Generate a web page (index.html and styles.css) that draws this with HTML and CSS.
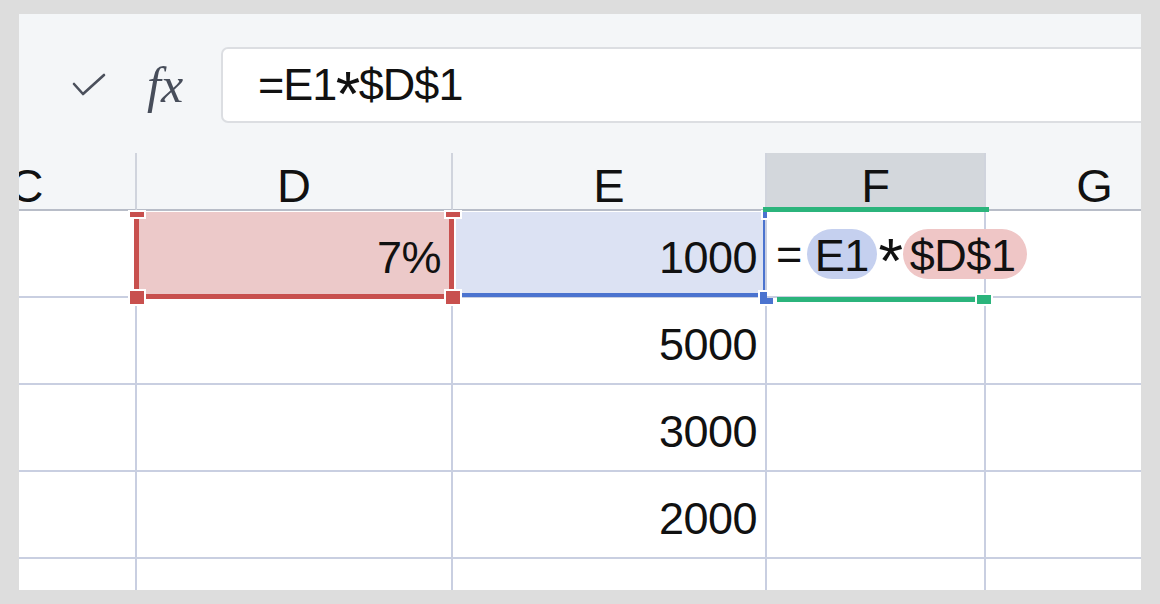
FILE: index.html
```html
<html lang="ja">
<head>
    <meta charset="UTF-8">
    <title>Formula reference</title>
    <link rel="stylesheet" href="styles.css">
</head>
<body>
    <div class="panel">
        <div class="formula-bar">
            <svg class="check" width="34" height="24" viewBox="0 0 34 24">
                <polyline points="2,11 11,21 32,2" fill="none" stroke="#4b505c" stroke-width="2.6" stroke-linecap="round" stroke-linejoin="round"/>
            </svg>
            <span class="fx">fx</span>
            <div class="formula-input">=E1<span class="op">*</span>$D$1</div>
        </div>

        <div class="sheet">
            <div class="head">C</div>
            <div class="head">D</div>
            <div class="head">E</div>
            <div class="head head-active">F</div>
            <div class="head">G</div>

            <!-- row 1 -->
            <div class="cell"></div>
            <div class="cell cell-d1">
                <span class="ref-red"></span>
                <span class="knob red top-left"></span>
                <span class="knob red top-right"></span>
                <span class="knob red bot-left"></span>
                <span class="knob red bot-right"></span>
                <span class="val">7%</span>
            </div>
            <div class="cell cell-e1">
                <span class="ref-blue"></span>
                <span class="knob blue top-right"></span>
                <span class="knob blue bot-right"></span>
                <span class="val">1000</span>
            </div>
            <div class="cell cell-f1">
                <span class="edit-top"></span>
                <span class="edit-bottom"></span>
                <span class="knob green bot-right"></span>
                <span class="eq">=</span>
                <span class="pill pill-blue">E1</span>
                <span class="op">*</span>
                <span class="pill pill-red">$D$1</span>
            </div>
            <div class="cell"></div>

            <!-- row 2 -->
            <div class="cell"></div>
            <div class="cell"></div>
            <div class="cell"><span class="val">5000</span></div>
            <div class="cell"></div>
            <div class="cell"></div>

            <!-- row 3 -->
            <div class="cell"></div>
            <div class="cell"></div>
            <div class="cell"><span class="val">3000</span></div>
            <div class="cell"></div>
            <div class="cell"></div>

            <!-- row 4 -->
            <div class="cell"></div>
            <div class="cell"></div>
            <div class="cell"><span class="val">2000</span></div>
            <div class="cell"></div>
            <div class="cell"></div>

            <!-- row 5 -->
            <div class="cell"></div>
            <div class="cell"></div>
            <div class="cell"></div>
            <div class="cell"></div>
            <div class="cell"></div>
        </div>
    </div>
</body>
</html>
```

FILE: styles.css
```css
body{
    margin: 0;
    padding: 14px 0 0 19px;
    background-color: #dddddd;
    font-family: "Liberation Sans", Arial, sans-serif;
    color: #111111;
}

.panel{
    width: 1122px;
    height: 576px;
    overflow: hidden;
    background-color: #f4f6f8;
}

/* formula bar */
.formula-bar{
    display: flex;
    align-items: center;
    height: 76px;
    padding: 33px 0 0 53px;
}
.check{
    display: block;
    flex-shrink: 0;
}
.fx{
    width: 50px;
    margin-left: 41px;
    font-family: "Liberation Serif", serif;
    font-style: italic;
    font-size: 50px;
    color: #474d5a;
    flex-shrink: 0;
}
.formula-input{
    flex: 1;
    display: flex;
    align-items: center;
    box-sizing: border-box;
    height: 76px;
    margin-left: 24px;
    margin-right: -30px;
    padding-left: 35px;
    background-color: #ffffff;
    border: 2px solid #dcdee2;
    border-radius: 7px;
    font-size: 45px;
    letter-spacing: -1px;
}
.op{
    display: inline-block;
    transform: translateY(9px) scale(1.4);
    margin: 0 3px;
}

/* grid */
.sheet{
    display: grid;
    grid-template-columns: 219px 316px 314px 219px 219px;
    grid-template-rows: 58px repeat(5, 87px);
    margin-top: 30px;
    margin-left: -101px;
    width: 1287px;
}
.head{
    box-sizing: border-box;
    border-right: 2px solid #d0d4dd;
    border-bottom: 2px solid #b8bdc8;
    padding-top: 10px;
    font-size: 47px;
    text-align: center;
    line-height: 46px;
}
.head-active{
    background-color: #d3d7dc;
}
.cell{
    position: relative;
    box-sizing: border-box;
    display: flex;
    align-items: center;
    justify-content: flex-end;
    padding: 8px 8px 0 0;
    background-color: #ffffff;
    border-right: 2px solid #c9cfe1;
    border-bottom: 2px solid #c9cfe1;
    font-size: 45px;
    letter-spacing: -0.5px;
}
.val{
    position: relative;
    z-index: 2;
}
.cell-d1{
    padding-right: 10px;
}

/* reference boxes */
.ref-red{
    position: absolute;
    left: -3px;
    right: -3px;
    top: 1px;
    bottom: -3px;
    background-color: #ecc9c9;
    border: 5px solid #c8504e;
    border-top: none;
    z-index: 1;
}
.ref-blue{
    position: absolute;
    left: 3px;
    right: 0;
    top: 1px;
    bottom: -1px;
    background-color: #dce2f3;
    border-right: 2px solid #4b73cf;
    border-bottom: 4px solid #4b73cf;
    z-index: 1;
}
.knob{
    position: absolute;
    z-index: 3;
    box-shadow: 0 0 0 2px #ffffff;
}
.knob.red{ background-color: #c8504e; }
.knob.blue{ background-color: #4b73cf; }
.knob.green{ background-color: #2bb47c; }

.cell-d1 .top-left{ left: -7px; top: 1px; width: 14px; height: 5px; }
.cell-d1 .top-right{ left: 309px; top: 1px; width: 14px; height: 5px; }
.cell-d1 .bot-left{ left: -7px; top: 80px; width: 14px; height: 13px; }
.cell-d1 .bot-right{ left: 309px; top: 80px; width: 14px; height: 13px; }

.cell-e1 .top-right{ left: 310px; top: 1px; width: 8px; height: 6px; }
.cell-e1 .bot-right{ left: 307px; top: 81px; width: 13px; height: 12px; }

/* cell being edited, its text runs on over G1 */
.cell-f1{
    z-index: 4;
    justify-content: flex-start;
    padding: 0 0 0 9px;
    white-space: nowrap;
}
.cell-f1 > span{
    flex-shrink: 0;
}
.edit-top{
    position: absolute;
    left: -4px;
    top: -4px;
    width: 226px;
    height: 5px;
    background-color: #2bb47c;
}
.edit-bottom{
    position: absolute;
    left: 10px;
    top: 86px;
    width: 198px;
    height: 5px;
    background-color: #2bb47c;
}
.cell-f1 .bot-right{ left: 210px; top: 84px; width: 14px; height: 9px; }

.eq{
    margin-right: 5px;
}
.pill{
    display: flex;
    align-items: center;
    height: 50px;
    padding: 4px 8px 0;
    box-sizing: border-box;
    border-radius: 25px;
}
.pill-blue{
    background-color: #c5d0ef;
}
.pill-red{
    background-color: #efc6c6;
    padding: 4px 12px 0 7px;
}
.cell-f1 .op{
    transform: translateY(7px) scale(1.4);
    margin: 0 4px 0 5px;
}
```
